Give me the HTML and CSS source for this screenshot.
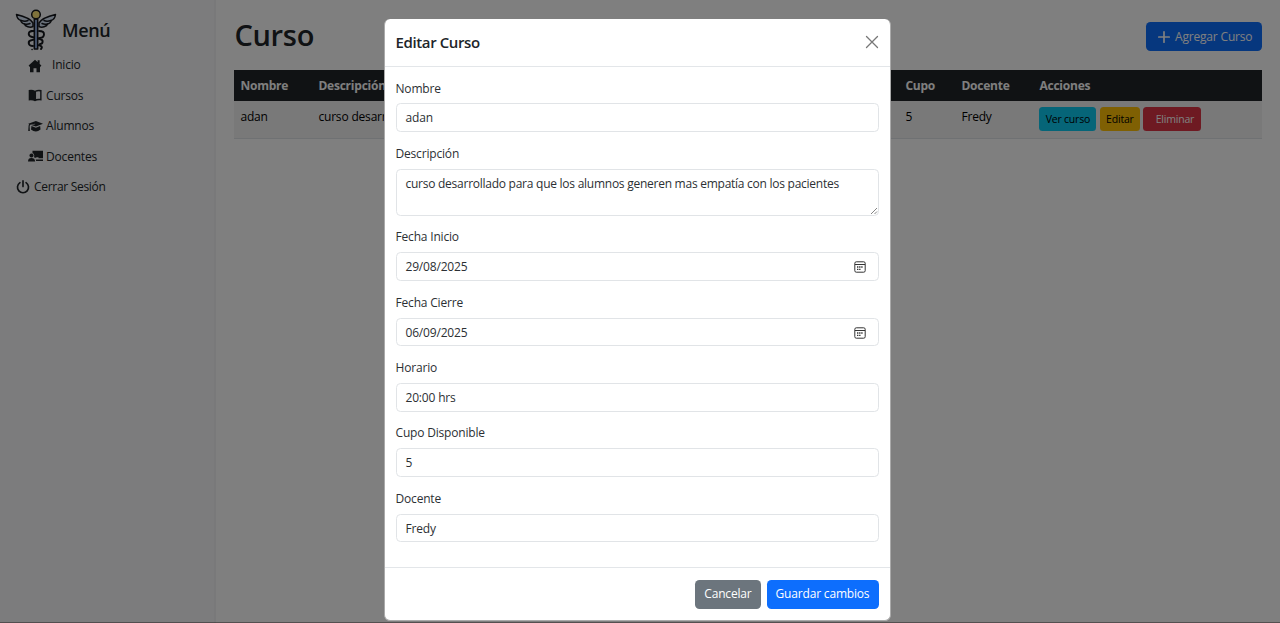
FILE: index.html
```html
<!DOCTYPE html>
<html lang="es">
<head>
<meta charset="utf-8">
<title>Curso</title>
<link rel="stylesheet" href="styles.css">
</head>
<body>
<div class="app">
  <aside class="sidebar">
    <div class="brand">
      <svg class="logo" viewBox="0 0 42 42" fill="none" stroke="#15171c" stroke-width="1.5" stroke-linecap="round" stroke-linejoin="round">
        <path fill="#d5e2f5" d="M18 14C15 9 8 7 1.500 5.500C2 9 4 11 6 11.500C5.500 13 8 15 9.500 15C10 17.500 15 19 18 17.500Z"/>
        <path fill="#d5e2f5" d="M24 14C27 9 34 7 40.500 5.500C40 9 38 11 36 11.500C36.500 13 34 15 32.500 15C32 17.500 27 19 24 17.500Z"/>
        <path d="M6 11.500C9 12.500 12 12 13 11.500M9.500 15C12 15.500 14 15 15 14.500M36 11.500C33 12.500 30 12 29 11.500M32.500 15C30 15.500 28 15 27 14.500"/>
        <path stroke-width="1.900" d="M18 22C12.500 22 12.500 27 17 28L25 30C29 31 28 35 25 35M24 22C31 22 30 28 25 29L17 31C12 32 13 37 18 37M16 22H19M22 36C26 36 28 38 26 40"/>
        <path fill="#8ba6d6" d="M19.300 10H22.700V40H19.300Z"/>
        <circle cx="21" cy="5.500" r="4.300" fill="#ffe477"/>
        <path d="M17 40.500H17.100"/>
      </svg>
      <span class="brand-name">Menú</span>
    </div>
    <nav class="nav">
      <a class="nav-item home"><svg viewBox="0 0 16 16"><path d="M8 .8 15.300 7.500 14.300 8.800H13.700V15H9.700V10.500H6.300V15H2.300V8.800H1.700L.7 7.500ZM11 1.500H13.300V6L11 4Z"/></svg><span>Inicio</span></a>
      <a class="nav-item"><svg viewBox="0 0 16 16"><path fill-rule="evenodd" d="M.8 2.200Q5 1.300 8 3V15Q5 13.600 .8 14.200ZM8 3Q11 1.300 15.500 2.200V14.200Q11 13.600 8 15ZM9.200 4.200V12.500Q11.500 12 13.900 12.300V3.900Q11.500 3.300 9.200 4.200Z"/></svg><span>Cursos</span></a>
      <a class="nav-item"><svg class="wide" viewBox="0 0 20 16"><path d="M.3 5 10.500 1.200 20 5 10.500 8.800 4.500 6.600 9.500 5.600V5L3 6.300Q2.200 7 2.200 9L2.500 14.500H.3L.7 8.500Q.7 7 1.500 6ZM4.600 7.900 10.500 10.300 16.200 8 16.700 12.800Q13.500 15.300 10.500 15.300 7 15.300 4 12.800Z"/></svg><span>Alumnos</span></a>
      <a class="nav-item"><svg class="wide" viewBox="0 0 20 16"><path d="M6 1H20V11H14V9.500H11V10.300H9.300Q8.500 9.800 8 9.600 9.300 5.500 6 4ZM4.700 4.500A2.700 2.700 0 1 1 4.600 4.500ZM0 15.300Q0 10.800 4.600 10.800T9.500 15.300ZM10.300 12.500H20V14.700H10.800Z"/></svg><span>Docentes</span></a>
      <a class="nav-item logout"><svg viewBox="0 0 16 16" fill="none" stroke="#212529" stroke-width="1.900" stroke-linecap="round"><path d="M8 1V7.500M4.500 3A6.300 6.300 0 1 0 11.500 3"/></svg><span>Cerrar Sesión</span></a>
    </nav>
  </aside>
  <main class="main">
    <div class="page-head">
      <h1>Curso</h1>
      <button class="btn primary add"><svg viewBox="0 0 14 14" stroke="#fff" stroke-width="1.700" stroke-linecap="round"><path d="M7 1.800V12.200M1.800 7H12.200"/></svg><span>Agregar Curso</span></button>
    </div>
    <table class="courses">
      <thead><tr><th class="c-name">Nombre</th><th class="c-desc">Descripción</th><th class="c-seats">Cupo</th><th class="c-teacher">Docente</th><th>Acciones</th></tr></thead>
      <tbody><tr><td>adan</td><td>curso desarr</td><td>5</td><td>Fredy</td><td><div class="actions"><button class="small view">Ver curso</button><button class="small edit">Editar</button><button class="small delete">Eliminar</button></div></td></tr></tbody>
    </table>
  </main>
</div>
<div class="backdrop">
  <section class="modal">
    <header class="modal-head">
      <h2>Editar Curso</h2>
      <svg class="close" viewBox="0 0 14 14" fill="none" stroke="#777" stroke-width="1.300" stroke-linecap="round"><path d="M1.500 1.500 12.500 12.500M12.500 1.500 1.500 12.500"/></svg>
    </header>
    <div class="modal-body">
      <div class="field"><label>Nombre</label><div class="control">adan</div></div>
      <div class="field"><label>Descripción</label><div class="control area"><span class="long">curso desarrollado para que los alumnos generen mas empatía con los pacientes</span><svg class="grip" viewBox="0 0 8 8" stroke="#666" stroke-width=".8"><path d="M1 7 7 1M4.500 7 7 4.500"/></svg></div></div>
      <div class="field"><label>Fecha Inicio</label><div class="control date"><span>29/08/2025</span><svg viewBox="0 0 12 12"><rect x=".8" y=".8" width="10.400" height="10.400" rx="1.500" fill="none" stroke="#333"/><path stroke="#333" d="M1 3.500H11"/><path stroke="#333" stroke-width="1.300" stroke-dasharray="1.400 .7" d="M3 6H9.300M3 8.300H7"/></svg></div></div>
      <div class="field"><label>Fecha Cierre</label><div class="control date"><span>06/09/2025</span><svg viewBox="0 0 12 12"><rect x=".8" y=".8" width="10.400" height="10.400" rx="1.500" fill="none" stroke="#333"/><path stroke="#333" d="M1 3.500H11"/><path stroke="#333" stroke-width="1.300" stroke-dasharray="1.400 .7" d="M3 6H9.300M3 8.300H7"/></svg></div></div>
      <div class="field"><label>Horario</label><div class="control">20:00 hrs</div></div>
      <div class="field"><label>Cupo Disponible</label><div class="control">5</div></div>
      <div class="field"><label>Docente</label><div class="control">Fredy</div></div>
    </div>
    <footer class="modal-foot">
      <button class="btn secondary">Cancelar</button>
      <button class="btn primary save">Guardar cambios</button>
    </footer>
  </section>
</div>
</body>
</html>
```
FILE: styles.css
```css
* { box-sizing: border-box; }
body { margin: 0; height: 623px; overflow: hidden; font: 12px/18.3px "Open Sans", "Noto Sans", sans-serif; letter-spacing: -.18px; color: #212529; background: #fff; }
button { font: inherit; letter-spacing: inherit; border: 0; margin: 0; }
svg { display: block; flex: none; }
.app { display: flex; height: 623px; border-right: 1px solid #fff; }
.sidebar { width: 216.400px; padding: 9px 0 0 15px; background: #f8f9fa; border-right: 2px solid #f2f3f4; }
.brand { display: flex; align-items: center; height: 42px; gap: 5px; }
.logo { width: 42px; height: 42px; }
.brand-name { font-size: 18px; font-weight: 600; letter-spacing: -.4px; }
.nav { display: flex; flex-direction: column; }
.nav-item { display: flex; align-items: center; height: 30.500px; padding-left: 13px; gap: 4px; }
.nav-item:first-child { height: 29px; }
.nav-item:not(:first-child) span { padding-top: 1px; }
.nav-item svg { width: 14px; height: 14px; fill: #212529; }
.nav-item svg.wide { width: 15px; margin-right: -1px; }
.nav-item.home { gap: 10px; }
.nav-item.logout { padding-left: 1px; letter-spacing: -.3px; }
.nav-item.logout svg { fill: none; }
.main { flex: 1; padding: 22px 17px 0 18px; }
.page-head { display: flex; justify-content: space-between; align-items: center; height: 29px; margin-bottom: 19px; }
h1 { margin: -2px 0 0; font-size: 29px; font-weight: 600; letter-spacing: -.3px; }
.btn { height: 29px; padding: 1px 9px 0; border-radius: 4.500px; color: #fff; white-space: nowrap; }
.primary { background: #0d6efd; }
.secondary { background: #6c757d; }
.add { display: flex; align-items: center; gap: 4px; width: 116px; padding-left: 11px; }
.add svg { width: 14px; height: 14px; }
.courses { width: 100%; border-collapse: collapse; table-layout: fixed; }
th { height: 31px; padding: 1px 6px 0; background: #212529; color: #fff; text-align: left; font-weight: 700; letter-spacing: -.22px; }
td { height: 37px; padding: 7px 6px 0; vertical-align: top; background: #f2f2f2; border-bottom: 1px solid #dee2e6; white-space: nowrap; color: #000; }
.c-name { width: 78px; }
.c-desc { width: 587px; }
.c-seats { width: 56px; }
.c-teacher { width: 78px; }
.actions { display: flex; gap: 3.500px; margin-top: -1px; }
.small { height: 24px; padding: 1px 0 0; border-radius: 3.500px; font-size: 10.500px; letter-spacing: -.2px; }
.view { width: 57px; background: #0dcaf0; }
.edit { width: 40px; background: #ffc107; }
.delete { width: 58px; padding-left: 5px; background: #dc3545; color: #fff; }
.backdrop { position: fixed; inset: 0; background: rgba(0, 0, 0, .5); border-bottom: 1px solid rgba(20, 10, 10, .4); display: flex; justify-content: center; align-items: flex-start; padding: 19px 6px 0 0; }
.modal { width: 507px; height: 602px; background: #fff; border: 1px solid #aaa; border-top: 0; border-radius: 6px; }
.modal-head { height: 48px; padding: 0 11px; display: flex; align-items: center; justify-content: space-between; border-bottom: 1px solid #e3e6e9; }
h2 { margin: 0; font-size: 15px; font-weight: 600; letter-spacing: -.38px; }
.close { width: 14px; height: 14px; margin-top: -2px; }
.modal-body { padding: 12px 11px; height: 500px; color: #2c3034; }
.field { margin-bottom: 12.200px; }
label { display: block; height: 18.300px; padding-top: .6px; margin-bottom: 6.100px; }
.control { height: 28.800px; padding: 5px 9px 0; border: 1px solid #e1e4e7; border-radius: 4.500px; }
.long { letter-spacing: -.255px; }
.area { position: relative; height: 46.800px; }
.grip { position: absolute; right: 0; bottom: 0; width: 8px; height: 8px; }
.date { display: flex; align-items: flex-start; justify-content: space-between; padding-right: 12px; }
.date svg { width: 12px; height: 12px; margin-top: 3px; }
.modal-foot { height: 53px; padding-right: 11px; display: flex; align-items: center; justify-content: flex-end; gap: 6px; border-top: 1px solid #e3e6e9; }
.save { width: 112px; }
```
